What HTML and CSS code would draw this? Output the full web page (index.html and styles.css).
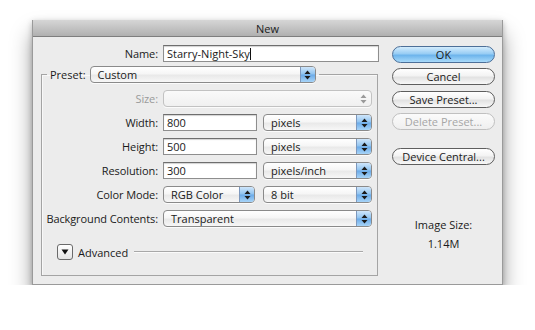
FILE: index.html
```html
<!DOCTYPE html>
<html>
<head>
<meta charset="utf-8">
<link rel="stylesheet" href="styles.css">
</head>
<body>
<div class="window">
  <div class="titlebar">New</div>
  <div class="content">
    <div class="main">
      <div class="namerow">
        <span class="lbl">Name:</span>
        <div class="input">Starry-Night-Sky<span class="caret"></span></div>
      </div>
      <fieldset class="group">
        <legend class="legend">
          <span class="legend-text">Preset:</span>
          <div class="popup preset"><span class="ptext">Custom</span><span class="arrows"><svg width="7" height="10" viewBox="0 0 7 10"><path d="M3.5 0.5 L6.5 4 L0.5 4 Z M3.5 9.5 L6.5 6 L0.5 6 Z"/></svg></span></div>
        </legend>
        <div class="grid">
          <span class="lbl dim">Size:</span>
          <div class="popup disabled"><span class="ptext"></span><span class="arrows"><svg width="7" height="10" viewBox="0 0 7 10"><path d="M3.5 0.5 L6.5 4 L0.5 4 Z M3.5 9.5 L6.5 6 L0.5 6 Z"/></svg></span></div>

          <span class="lbl">Width:</span>
          <div class="pair">
            <div class="input">800</div>
            <div class="popup"><span class="ptext">pixels</span><span class="arrows"><svg width="7" height="10" viewBox="0 0 7 10"><path d="M3.5 0.5 L6.5 4 L0.5 4 Z M3.5 9.5 L6.5 6 L0.5 6 Z"/></svg></span></div>
          </div>

          <span class="lbl">Height:</span>
          <div class="pair">
            <div class="input">500</div>
            <div class="popup"><span class="ptext">pixels</span><span class="arrows"><svg width="7" height="10" viewBox="0 0 7 10"><path d="M3.5 0.5 L6.5 4 L0.5 4 Z M3.5 9.5 L6.5 6 L0.5 6 Z"/></svg></span></div>
          </div>

          <span class="lbl">Resolution:</span>
          <div class="pair">
            <div class="input">300</div>
            <div class="popup"><span class="ptext">pixels/inch</span><span class="arrows"><svg width="7" height="10" viewBox="0 0 7 10"><path d="M3.5 0.5 L6.5 4 L0.5 4 Z M3.5 9.5 L6.5 6 L0.5 6 Z"/></svg></span></div>
          </div>

          <span class="lbl">Color Mode:</span>
          <div class="pair mode">
            <div class="popup"><span class="ptext">RGB Color</span><span class="arrows"><svg width="7" height="10" viewBox="0 0 7 10"><path d="M3.5 0.5 L6.5 4 L0.5 4 Z M3.5 9.5 L6.5 6 L0.5 6 Z"/></svg></span></div>
            <div class="popup"><span class="ptext">8 bit</span><span class="arrows"><svg width="7" height="10" viewBox="0 0 7 10"><path d="M3.5 0.5 L6.5 4 L0.5 4 Z M3.5 9.5 L6.5 6 L0.5 6 Z"/></svg></span></div>
          </div>

          <span class="lbl">Background Contents:</span>
          <div class="popup"><span class="ptext">Transparent</span><span class="arrows"><svg width="7" height="10" viewBox="0 0 7 10"><path d="M3.5 0.5 L6.5 4 L0.5 4 Z M3.5 9.5 L6.5 6 L0.5 6 Z"/></svg></span></div>
        </div>
        <div class="advanced">
          <span class="disc"><svg width="8" height="6" viewBox="0 0 8 6"><path d="M0.5 0.5 L7.5 0.5 L4 5.5 Z"/></svg></span>
          <span class="adv-text">Advanced</span>
          <span class="rule"></span>
        </div>
      </fieldset>
    </div>
    <div class="side">
      <div class="btn default">OK</div>
      <div class="btn b-cancel">Cancel</div>
      <div class="btn b-save">Save Preset...</div>
      <div class="btn b-delete off">Delete Preset...</div>
      <div class="btn b-device">Device Central...</div>
      <div class="info">Image Size:</div>
      <div class="info val">1.14M</div>
    </div>
  </div>
</div>
</body>
</html>
```

FILE: styles.css
```css
* { box-sizing: border-box; }
html, body { margin: 0; background: #fff; }
body {
  padding: 20px 0 0 32px;
  font-family: "Open Sans", "DejaVu Sans", sans-serif;
  font-size: 11px;
  color: #1a1a1a;
}
.window {
  width: 471px;
  background: #ececec;
  box-shadow: 0 14px 20px rgba(0,0,0,0.38), 0 2px 6px rgba(0,0,0,0.25);
  border: 1px solid #9a9a9a;
  border-top: none;
}
.titlebar {
  height: 17px;
  line-height: 17px;
  text-align: center;
  font-size: 11px;
  color: #202020;
  background: linear-gradient(#d6d6d6, #b0b0b0);
  border-bottom: 1px solid #7e7e7e;
}
.content {
  display: flex;
  padding: 8px 7px 8px 8px;
}
.main { width: 338px; }
.namerow {
  display: grid;
  grid-template-columns: 117px 216px;
  column-gap: 5px;
  height: 17px;
}
.lbl {
  text-align: right;
  line-height: 17px;
  white-space: nowrap;
  letter-spacing: -0.1px;
}
.dim { color: #9a9a9a; }
.input {
  height: 17px;
  line-height: 15px;
  background: #fff;
  border: 1px solid #8e8e8e;
  border-top-color: #6e6e6e;
  box-shadow: inset 0 1px 1px rgba(0,0,0,0.18);
  padding-left: 3px;
  white-space: nowrap;
}
.caret {
  display: inline-block;
  width: 1px;
  height: 12px;
  background: #111;
  vertical-align: -2px;
}
.group {
  margin: 4px 0 0 0;
  padding: 0 5px 15px 0;
  width: 337px;
  min-width: 0;
  border: 1px solid #a4a4a4;
  box-shadow: inset 1px 1px 0 #f8f8f8;
}
.legend {
  margin-left: 5px;
  padding: 0 3px;
  display: flex;
  align-items: center;
  gap: 4px;
}
.legend-text { line-height: 17px; }
.preset { width: 226px; }
.popup {
  display: flex;
  height: 17px;
  border: 1px solid #8a8a8a;
  border-radius: 4px;
  background: linear-gradient(#ffffff, #f6f6f6 45%, #e9e9e9 55%, #f7f7f7);
  box-shadow: 0 1px 0 rgba(255,255,255,0.8);
  overflow: hidden;
}
.ptext {
  flex: 1;
  line-height: 15px;
  padding-left: 7px;
  white-space: nowrap;
}
.arrows {
  width: 15px;
  display: flex;
  align-items: center;
  justify-content: center;
  background: linear-gradient(#cfe6fb, #8fc3f0 48%, #6aaae8 52%, #a7d4f8);
  border-left: 1px solid #7d98bd;
}
.arrows svg { fill: #1b1b1b; }
.disabled { border-color: #c2c2c2; background: linear-gradient(#fafafa, #f0f0f0); }
.disabled .arrows { background: transparent; border-left: none; }
.disabled .arrows svg { fill: #9a9a9a; }
.grid {
  display: grid;
  grid-template-columns: 116px 209px;
  column-gap: 5px;
  row-gap: 7px;
  padding-top: 7px;
}
.pair {
  display: grid;
  grid-template-columns: 94px 1fr;
  column-gap: 6px;
}
.pair.mode { grid-template-columns: 92px 1fr; column-gap: 8px; }
.advanced {
  display: flex;
  align-items: center;
  margin-top: 17px;
  padding: 0 9px 0 15px;
  height: 16px;
}
.disc {
  width: 16px;
  height: 16px;
  border: 1px solid #6a6a6a;
  border-radius: 3px;
  background: linear-gradient(#ffffff, #e4e4e4);
  display: flex;
  align-items: center;
  justify-content: center;
}
.disc svg { fill: #111; }
.adv-text { margin-left: 5px; }
.rule {
  flex: 1;
  height: 2px;
  margin-left: 6px;
  border-top: 1px solid #a8a8a8;
  border-bottom: 1px solid #fafafa;
}
.side {
  margin-left: 13px;
  width: 103px;
  display: flex;
  flex-direction: column;
  padding-top: 1px;
}
.btn {
  height: 17px;
  line-height: 15px;
  text-align: center;
  border: 1px solid #5e5e5e;
  border-radius: 9px;
  background: linear-gradient(#ffffff, #f3f3f3 45%, #e2e2e2 55%, #f8f8f8);
  white-space: nowrap;
}
.default {
  border-color: #4d6f98;
  background: linear-gradient(#d3ecfd, #98cdf4 45%, #6db4ec 55%, #a8dafa);
}
.b-cancel { margin-top: 5px; }
.b-save { margin-top: 6px; }
.b-delete { margin-top: 5px; }
.off { color: #a6a6a6; border-color: #c0c0c0; background: linear-gradient(#fbfbfb, #efefef); }
.b-device { margin-top: 18px; }
.info { text-align: center; line-height: 14px; margin-top: 53px; }
.info.val { margin-top: 5px; }
```
